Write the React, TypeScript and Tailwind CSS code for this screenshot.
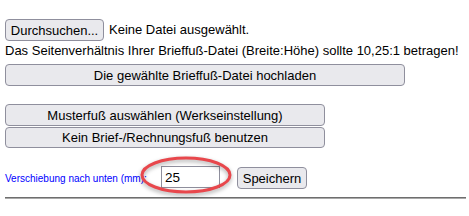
import React from 'react';

// Firefox-artige Standard-Buttons
const btn =
  'bg-[#e9e9ed] border border-[#8f8f9d] rounded-[4px] text-black text-[13px] leading-none flex items-center justify-center';

export default function App() {
  return (
    <div
      className="w-[469px] h-[216px] bg-white text-black pt-[19px] pl-[5px] pr-[4px] relative overflow-hidden"
      style={{ fontFamily: '"Liberation Sans", Arial, sans-serif' }}
    >
      {/* Datei-Auswahl */}
      <div className="flex items-center h-[22px]">
        <button className={`${btn} w-[99px] h-[22px]`}>Durchsuchen...</button>
        <span className="ml-[5px] text-[13px]">Keine Datei ausgewählt.</span>
      </div>
      <p className="mt-[2px] text-[13px] leading-[16px] whitespace-nowrap">
        Das Seitenverhältnis Ihrer Brieffuß-Datei (Breite:Höhe) sollte 10,25:1 betragen!
      </p>
      <button className={`${btn} mt-[5px] w-[400px] h-[22px]`}>
        Die gewählte Brieffuß-Datei hochladen
      </button>

      {/* Vorlagen */}
      <button className={`${btn} mt-[18px] w-[320px] h-[22px]`}>
        Musterfuß auswählen (Werkseinstellung)
      </button>
      <button className={`${btn} mt-px w-[320px] h-[21px]`}>
        Kein Brief-/Rechnungsfuß benutzen
      </button>

      {/* Verschiebung */}
      <div className="mt-[18px] flex items-start h-[23px]">
        <span className="w-[156px] mt-[7px] text-[10px] leading-[12px] text-[#0000ff] whitespace-nowrap">
          Verschiebung nach unten (mm):
        </span>
        <input
          defaultValue="25"
          className="w-[59px] h-[22px] border border-[#8f8f9d] px-[3px] text-[13.5px] text-black outline-none bg-white"
        />
        <button className={`${btn} ml-[17px] mt-px w-[70px] h-[22px]`}>Speichern</button>
      </div>

      <div className="mt-[8px] h-[2px] w-[461px] border-t border-[#6e6e6e] border-b border-b-[#a9a9a9]" />

      {/* Markierung */}
      <svg
        className="absolute left-[136px] top-[151px] pointer-events-none"
        width="102"
        height="50"
        viewBox="0 0 102 50"
        style={{ filter: 'drop-shadow(0 2px 2px rgba(0,0,0,0.35))' }}
      >
        <ellipse cx="50" cy="24" rx="44" ry="17" fill="none" stroke="#e8474c" strokeWidth="3" />
      </svg>
    </div>
  );
}
